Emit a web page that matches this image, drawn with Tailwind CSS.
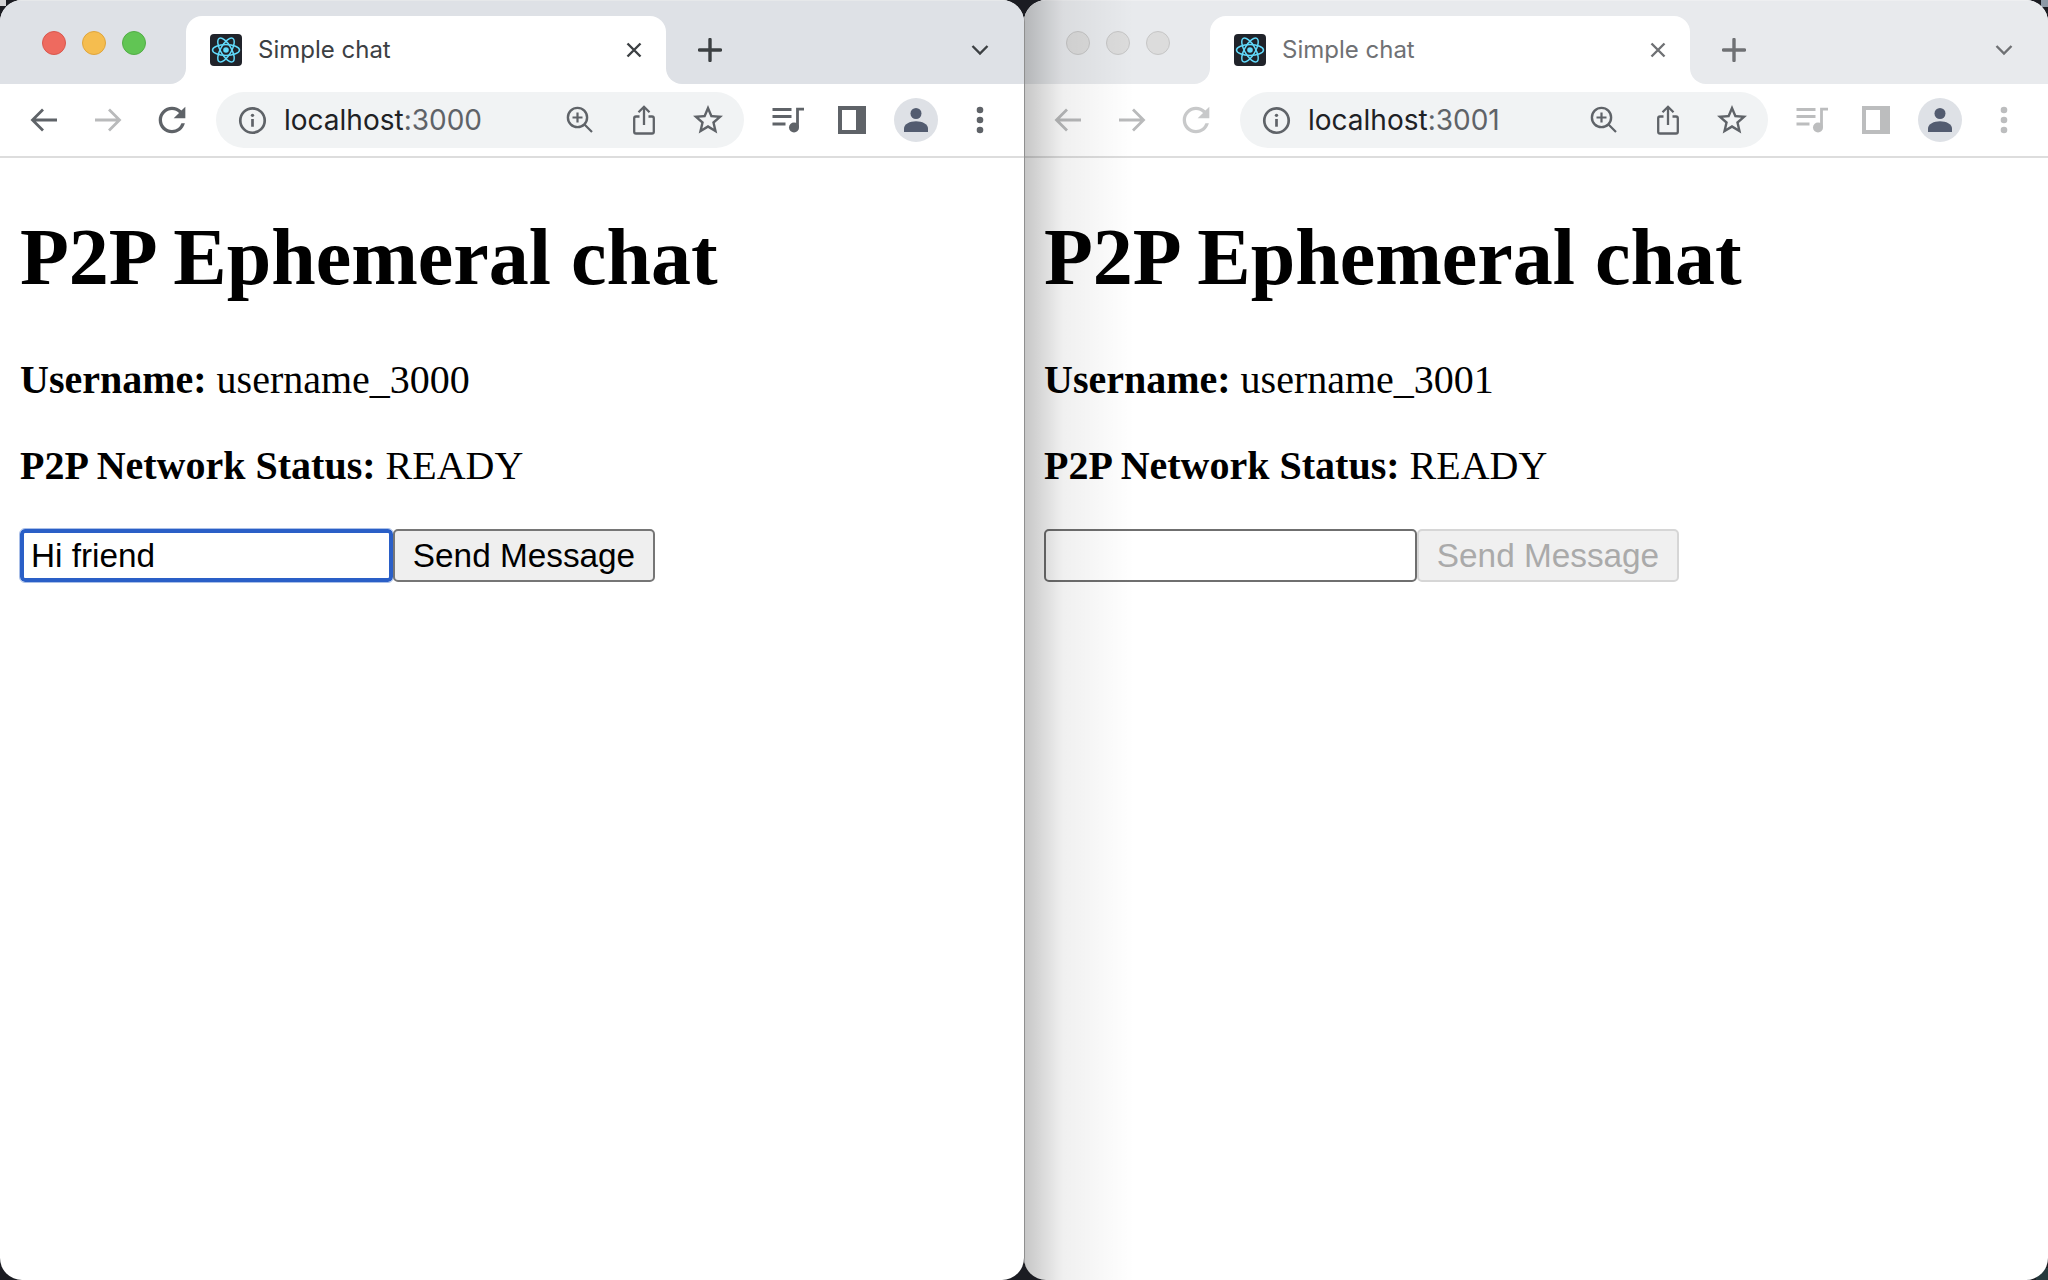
<!DOCTYPE html>
<html lang="en">
<head>
  <meta charset="UTF-8" />
  <title>Simple chat</title>
  <script src="https://cdn.jsdelivr.net/npm/@tailwindcss/browser@4"></script>
</head>
<body class="bg-[#1b1c22]">

  <!-- shared icons -->
  <svg class="hidden">
    <symbol id="i-atom" viewBox="0 0 32 32">
      <rect width="32" height="32" rx="4" fill="#20232a" />
      <g fill="none" stroke="#61dafb" stroke-width="1.5">
        <ellipse cx="16" cy="16" rx="13.5" ry="5.4" />
        <ellipse cx="16" cy="16" rx="13.5" ry="5.4" transform="rotate(60 16 16)" />
        <ellipse cx="16" cy="16" rx="13.5" ry="5.4" transform="rotate(120 16 16)" />
      </g>
      <circle cx="16" cy="16" r="2.8" fill="#61dafb" />
    </symbol>
    <symbol id="i-close" viewBox="0 0 16 16">
      <path d="M1.5 1.5 14.5 14.5M14.5 1.500 1.500 14.5" fill="none" stroke="currentColor" stroke-width="2.4" />
    </symbol>
    <symbol id="i-plus" viewBox="0 0 24 24">
      <path d="M12 1.5v21M1.5 12h21" fill="none" stroke="currentColor" stroke-width="3.4" stroke-linecap="round" />
    </symbol>
    <symbol id="i-chevron" viewBox="0 0 18 12">
      <path d="M1.5 2 9 9.5 16.500 2" fill="none" stroke="currentColor" stroke-width="2.4" />
    </symbol>
    <symbol id="i-back" viewBox="0 0 28 26">
      <path d="M27 13H3M13 2.500 2.500 13 13 23.5" fill="none" stroke="currentColor" stroke-width="2.8" />
    </symbol>
    <symbol id="i-forward" viewBox="0 0 28 26">
      <path d="M1 13h24M15 2.500 25.500 13 15 23.5" fill="none" stroke="currentColor" stroke-width="2.8" />
    </symbol>
    <symbol id="i-reload" viewBox="0 0 24 24">
      <path fill="currentColor" d="M17.65 6.35A7.958 7.958 0 0 0 12 4c-4.42 0-7.99 3.58-7.99 8s3.57 8 7.99 8c3.73 0 6.84-2.55 7.73-6h-2.08A5.99 5.99 0 0 1 12 18c-3.31 0-6-2.69-6-6s2.69-6 6-6c1.66 0 3.14.69 4.22 1.78L13 11h7V4l-2.35 2.35z" />
    </symbol>
    <symbol id="i-info" viewBox="0 0 28 28">
      <circle cx="14" cy="14" r="11.8" fill="none" stroke="currentColor" stroke-width="2.6" />
      <circle cx="14" cy="9" r="1.6" fill="currentColor" />
      <path d="M14 12.5V20" stroke="currentColor" stroke-width="2.6" />
    </symbol>
    <symbol id="i-zoom" viewBox="0 0 28 28">
      <circle cx="11.5" cy="11.5" r="9.6" fill="none" stroke="currentColor" stroke-width="2.4" />
      <path d="M11.5 6.500v10M6.500 11.500h10M18.500 18.500l7.500 7.500" fill="none" stroke="currentColor" stroke-width="2.2" />
    </symbol>
    <symbol id="i-share" viewBox="0 0 22 30">
      <path d="M6.500 11.500H3a1.800 1.800 0 0 0-1.800 1.800v13.400A1.800 1.800 0 0 0 3 28.500h16a1.800 1.800 0 0 0 1.800-1.800V13.300a1.800 1.800 0 0 0-1.800-1.800h-3.500M11 20V2M5.500 7.200 11 1.800l5.500 5.400" fill="none" stroke="currentColor" stroke-width="2.3" />
    </symbol>
    <symbol id="i-star" viewBox="0 0 24 24">
      <path fill="currentColor" d="M22 9.24l-7.19-.62L12 2 9.19 8.63 2 9.24l5.46 4.73L5.82 21 12 17.27 18.18 21l-1.63-7.03L22 9.24zM12 15.4l-3.76 2.27 1-4.28-3.32-2.88 4.38-.38L12 6.1l1.71 4.04 4.38.38-3.32 2.88 1 4.28L12 15.4z" />
    </symbol>
    <symbol id="i-media" viewBox="0 0 32 26">
      <path d="M0.5 2.500h19M0.5 9.500h19M0.5 17h13" fill="none" stroke="currentColor" stroke-width="2.8" />
      <path d="M25.500 20V2.200H32" fill="none" stroke="currentColor" stroke-width="2.8" />
      <circle cx="22" cy="20.5" r="5" fill="currentColor" />
    </symbol>
    <symbol id="i-side" viewBox="0 0 28 28">
      <path fill="currentColor" fill-rule="evenodd" d="M0 0h28v28H0zM4 4v20h14V4z" />
    </symbol>
    <symbol id="i-user" viewBox="0 0 24 24">
      <circle cx="12" cy="5.5" r="5.5" fill="currentColor" />
      <path fill="currentColor" d="M0 24v-3.500C0 16 6 13.200 12 13.200S24 16 24 20.500V24z" />
    </symbol>
    <symbol id="i-dots" viewBox="0 0 8 28">
      <circle cx="4" cy="4" r="3.3" fill="currentColor" />
      <circle cx="4" cy="14" r="3.3" fill="currentColor" />
      <circle cx="4" cy="24" r="3.3" fill="currentColor" />
    </symbol>
  </svg>

  <div class="relative w-[2048px] h-[1280px] flex overflow-hidden">
    <!-- wallpaper showing through the window corners -->
    <div class="absolute top-0 left-0 w-[6px] h-[6px] bg-[#d4d4d6]"></div>
    <div class="absolute top-0 right-0 w-[7px] h-[7px] bg-[#8d99a6]"></div>
    <div class="absolute bottom-0 right-0 w-[12px] h-[12px] bg-[#24383c]"></div>

    <!-- Window 3000 (focused) -->
    <section class="relative w-[1024px] h-full flex flex-col bg-white rounded-[22px] overflow-hidden">
      <div class="flex h-[84px] bg-[#dee1e6] border-t border-[#e6e8ea]">
        <div class="w-[186px] flex gap-4 pl-[42px] pt-[30px]">
          <span class="w-6 h-6 rounded-full bg-[#ee6a5f] border border-[#d9574d]"></span>
          <span class="w-6 h-6 rounded-full bg-[#f5bd4f] border border-[#dfa53c]"></span>
          <span class="w-6 h-6 rounded-full bg-[#61c554] border border-[#52ad46]"></span>
        </div>
        <div class="relative w-[480px] mt-[15px] bg-white rounded-t-[16px] flex items-center pl-6 pr-6">
          <span class="absolute -left-4 bottom-0 w-4 h-4 bg-white"><span class="block w-4 h-4 bg-[#dee1e6] rounded-br-[16px]"></span></span>
          <span class="absolute -right-4 bottom-0 w-4 h-4 bg-white"><span class="block w-4 h-4 bg-[#dee1e6] rounded-bl-[16px]"></span></span>
          <svg class="w-8 h-8 mr-4"><use href="#i-atom" /></svg>
          <span class="flex-1 text-[24px] font-['Inter',sans-serif] text-[#3c4043]">Simple chat</span>
          <svg class="w-4 h-4 text-[#3c4043]"><use href="#i-close" /></svg>
        </div>
        <div class="flex-1 flex items-center justify-between pl-8 pr-[35px] pt-[15px]">
          <svg class="w-6 h-6 text-[#3c4043]"><use href="#i-plus" /></svg>
          <svg class="w-[18px] h-3 text-[#3c4043]"><use href="#i-chevron" /></svg>
        </div>
      </div>

      <div class="flex items-center h-[74px] border-b-2 border-[#dddddd] pl-3 text-[#5f6368]">
        <span class="w-16 flex justify-center"><svg class="w-7 h-[26px]"><use href="#i-back" /></svg></span>
        <span class="w-16 flex justify-center text-[#b9babb]"><svg class="w-7 h-[26px]"><use href="#i-forward" /></svg></span>
        <span class="w-16 flex justify-center"><svg class="w-10 h-10"><use href="#i-reload" /></svg></span>
        <div class="ml-3 w-[528px] h-14 rounded-full bg-[#f1f3f4] flex items-center pl-[22px]">
          <svg class="w-[29px] h-[29px]"><use href="#i-info" /></svg>
          <span class="w-[264px] ml-[17px] text-[28px] font-['Inter',sans-serif] text-[#202124]">localhost<span class="text-[#5f6368]">:3000</span></span>
          <span class="w-16 flex justify-center"><svg class="w-7 h-7"><use href="#i-zoom" /></svg></span>
          <span class="w-16 flex justify-center"><svg class="w-[22px] h-[30px]"><use href="#i-share" /></svg></span>
          <span class="w-16 flex justify-center"><svg class="w-9 h-9"><use href="#i-star" /></svg></span>
        </div>
        <span class="ml-3 w-16 flex justify-center"><svg class="w-8 h-[26px]"><use href="#i-media" /></svg></span>
        <span class="w-16 flex justify-center"><svg class="w-7 h-7"><use href="#i-side" /></svg></span>
        <span class="w-16 flex justify-center"><span class="w-11 h-11 rounded-full bg-[#dee1e6] flex items-center justify-center text-[#535c70]"><svg class="w-6 h-6"><use href="#i-user" /></svg></span></span>
        <span class="w-16 flex justify-center"><svg class="w-2 h-7"><use href="#i-dots" /></svg></span>
      </div>

      <main class="flex-1 px-5 font-['Liberation_Serif',serif] text-black">
        <h1 class="mt-[53px] mb-[54px] text-[80px] leading-[92px] font-bold">P2P Ephemeral chat</h1>
        <p class="mb-10 text-[40px] leading-[46px]"><b>Username:</b> username_3000</p>
        <p class="mb-10 text-[40px] leading-[46px]"><b>P2P Network Status:</b> READY</p>
        <form class="flex font-['Liberation_Sans',sans-serif] text-[33.33px]">
          <input type="text" value="Hi friend" class="w-[373px] h-[53px] px-[7px] bg-white rounded-[5px] border-[4px] border-[#2a5fc7] outline outline-[1px] outline-[#a9bfe8]" />
          <button type="button" class="w-[262px] h-[53px] bg-[#efefef] rounded-[5px] border-[2.5px] border-[#767676]">Send Message</button>
        </form>
      </main>
    </section>

    <!-- Window 3001 (unfocused) -->
    <section class="relative w-[1024px] h-full flex flex-col bg-white rounded-[22px] overflow-hidden">
      <div class="flex h-[84px] bg-[#e8eaed] border-t border-[#eeeff1]">
        <div class="w-[186px] flex gap-4 pl-[42px] pt-[30px]">
          <span class="w-6 h-6 rounded-full bg-[#dcdcdc] border border-[#c6c6c6]"></span>
          <span class="w-6 h-6 rounded-full bg-[#dcdcdc] border border-[#c6c6c6]"></span>
          <span class="w-6 h-6 rounded-full bg-[#dcdcdc] border border-[#c6c6c6]"></span>
        </div>
        <div class="relative w-[480px] mt-[15px] bg-white rounded-t-[16px] flex items-center pl-6 pr-6">
          <span class="absolute -left-4 bottom-0 w-4 h-4 bg-white"><span class="block w-4 h-4 bg-[#e8eaed] rounded-br-[16px]"></span></span>
          <span class="absolute -right-4 bottom-0 w-4 h-4 bg-white"><span class="block w-4 h-4 bg-[#e8eaed] rounded-bl-[16px]"></span></span>
          <svg class="w-8 h-8 mr-4"><use href="#i-atom" /></svg>
          <span class="flex-1 text-[24px] font-['Inter',sans-serif] text-[#6f7174]">Simple chat</span>
          <svg class="w-4 h-4 text-[#6f7174]"><use href="#i-close" /></svg>
        </div>
        <div class="flex-1 flex items-center justify-between pl-8 pr-[35px] pt-[15px]">
          <svg class="w-6 h-6 text-[#6f7174]"><use href="#i-plus" /></svg>
          <svg class="w-[18px] h-3 text-[#6f7174]"><use href="#i-chevron" /></svg>
        </div>
      </div>

      <div class="flex items-center h-[74px] border-b-2 border-[#dddddd] pl-3 text-[#5f6368]">
        <span class="w-16 flex justify-center text-[#b9babb]"><svg class="w-7 h-[26px]"><use href="#i-back" /></svg></span>
        <span class="w-16 flex justify-center text-[#b9babb]"><svg class="w-7 h-[26px]"><use href="#i-forward" /></svg></span>
        <span class="w-16 flex justify-center text-[#c8c9ca]"><svg class="w-10 h-10"><use href="#i-reload" /></svg></span>
        <div class="ml-3 w-[528px] h-14 rounded-full bg-[#f1f3f4] flex items-center pl-[22px]">
          <svg class="w-[29px] h-[29px]"><use href="#i-info" /></svg>
          <span class="w-[264px] ml-[17px] text-[28px] font-['Inter',sans-serif] text-[#202124]">localhost<span class="text-[#5f6368]">:3001</span></span>
          <span class="w-16 flex justify-center"><svg class="w-7 h-7"><use href="#i-zoom" /></svg></span>
          <span class="w-16 flex justify-center"><svg class="w-[22px] h-[30px]"><use href="#i-share" /></svg></span>
          <span class="w-16 flex justify-center"><svg class="w-9 h-9"><use href="#i-star" /></svg></span>
        </div>
        <span class="ml-3 w-16 flex justify-center text-[#bcbdbe]"><svg class="w-8 h-[26px]"><use href="#i-media" /></svg></span>
        <span class="w-16 flex justify-center text-[#bcbdbe]"><svg class="w-7 h-7"><use href="#i-side" /></svg></span>
        <span class="w-16 flex justify-center"><span class="w-11 h-11 rounded-full bg-[#dee1e6] flex items-center justify-center text-[#535c70]"><svg class="w-6 h-6"><use href="#i-user" /></svg></span></span>
        <span class="w-16 flex justify-center text-[#bcbdbe]"><svg class="w-2 h-7"><use href="#i-dots" /></svg></span>
      </div>

      <main class="flex-1 px-5 font-['Liberation_Serif',serif] text-black">
        <h1 class="mt-[53px] mb-[54px] text-[80px] leading-[92px] font-bold">P2P Ephemeral chat</h1>
        <p class="mb-10 text-[40px] leading-[46px]"><b>Username:</b> username_3001</p>
        <p class="mb-10 text-[40px] leading-[46px]"><b>P2P Network Status:</b> READY</p>
        <form class="flex font-['Liberation_Sans',sans-serif] text-[33.33px]">
          <input type="text" class="w-[373px] h-[53px] px-[7px] bg-white rounded-[5px] border-[2.5px] border-[#6f6f6f]" />
          <button type="button" disabled class="w-[262px] h-[53px] bg-[#f0f0f0] text-[#aaaaaa] rounded-[5px] border-[2.5px] border-[#d6d6d6]">Send Message</button>
        </form>
      </main>

      <!-- shadow cast by the focused window -->
      <div class="absolute inset-y-0 left-0 w-[110px] border-l border-[#8f8f8f] bg-gradient-to-r from-black/22 via-black/6 via-35% to-transparent pointer-events-none"></div>
    </section>
  </div>
</body>
</html>
